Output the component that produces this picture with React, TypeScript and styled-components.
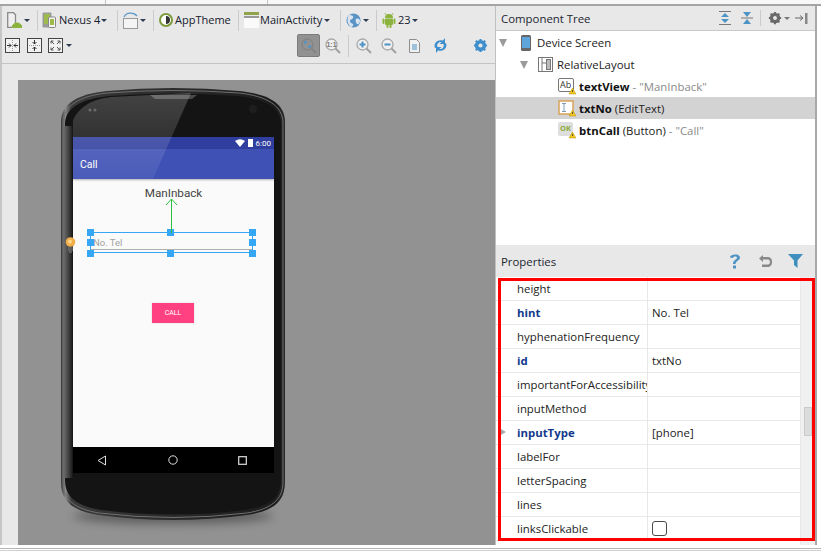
import React, { FC } from 'react'
import styled, { createGlobalStyle } from 'styled-components'

const GlobalStyle = createGlobalStyle`
  html, body { margin: 0; padding: 0; background: #fff; }
  * { box-sizing: border-box; }
`

const Page = styled.div`
  width: 821px;
  height: 551px;
  overflow: hidden;
  display: flex;
  flex-direction: column;
  background: #fff;
  font-family: "Open Sans", "Noto Sans", sans-serif;
  font-size: 11.4px;
  color: #1c1c1c;
`
const TopStrip = styled.div`
  height: 6px;
  flex: none;
  background:
    linear-gradient(#c4c4c4, #c4c4c4) 105px 0 / 1px 4px no-repeat,
    linear-gradient(#c4c4c4, #c4c4c4) 267px 0 / 1px 4px no-repeat,
    #f8f8f8;
  border-bottom: 2px solid #a4a4a4;
`
const Main = styled.div`
  display: flex;
  height: 539px;
  flex: none;
`
const BottomStrip = styled.div`
  flex: 1;
  background: #fff;
  margin-top: 3px;
  border-top: 1px solid #b4b4b4;
  border-bottom: 1px solid #d0d0d0;
`
const Designer = styled.div`
  width: 496px;
  flex: none;
  display: flex;
  flex-direction: column;
  background: #e8e8e8;
  border-left: 2px solid #c6c6c6;
  border-right: 1px solid #c0c0c0;
`
const Toolbar = styled.div`
  height: 58px;
  flex: none;
  padding-top: 1px;
  border-bottom: 1px solid #c4c4c4;
  display: flex;
  flex-direction: column;
`
const ToolRow = styled.div`
  display: flex;
  align-items: center;
  height: 26px;
  padding-left: 5px;
`
const ToolRowBottom = styled(ToolRow)`
  height: 25px;
  padding-left: 3px;
`
const Sep = styled.span<{ $l: number; $r: number; $h?: number }>`
  width: 1px;
  height: ${(p) => p.$h ?? 21}px;
  background: #cbcbcb;
  margin: 0 ${(p) => p.$r}px 0 ${(p) => p.$l}px;
  flex: none;
`
const ToolLabel = styled.span<{ $l?: number; $w: number }>`
  font-size: 11px;
  color: #14202c;
  margin-left: ${(p) => p.$l ?? 3}px;
  width: ${(p) => p.$w}px;
  flex: none;
  white-space: nowrap;
  line-height: 16px;
`
const Caret = styled.span<{ $l?: number; $c?: string }>`
  width: 0;
  height: 0;
  flex: none;
  margin-left: ${(p) => p.$l ?? 2}px;
  border-left: 3px solid transparent;
  border-right: 3px solid transparent;
  border-top: 3px solid ${(p) => p.$c ?? '#2e3d52'};
`
const Icon = styled.svg<{ $l?: number; $mr?: number }>`
  flex: none;
  display: block;
  margin-left: ${(p) => p.$l ?? 0}px;
  margin-right: ${(p) => p.$mr ?? 0}px;
`
const ActiveTool = styled.div`
  width: 23px;
  height: 23px;
  margin-left: 225px;
  flex: none;
  background: #929292;
  border: 1px solid #7c7c7c;
  border-radius: 2px;
  display: flex;
  align-items: center;
  justify-content: center;
`
const CanvasArea = styled.div`
  flex: 1;
  padding: 16px 0 0 16px;
  min-height: 0;
`
const Stage = styled.div`
  height: 465px;
  background: #929292;
  padding: 10px 0 0 43px;
`
const Phone = styled.div`
  position: relative;
  width: 224px;
  height: 432px;
`
const PhoneArt = styled.svg`
  position: absolute;
  left: -14px;
  top: -4px;
`
const Screen = styled.div`
  position: absolute;
  left: 12px;
  top: 47px;
  width: 201px;
  height: 336px;
  display: flex;
  flex-direction: column;
  background: #fafafa;
`
const StatusBar = styled.div`
  height: 12px;
  flex: none;
  background: #303f9f;
  color: #fff;
  display: flex;
  align-items: center;
  justify-content: flex-end;
  gap: 3px;
  padding-right: 3px;
  font-family: Roboto, sans-serif;
  font-size: 8px;
`
const AppBar = styled.div`
  height: 30px;
  flex: none;
  background: #3f51b5;
  color: #fff;
  font-family: Roboto, sans-serif;
  font-size: 10.5px;
  display: flex;
  align-items: center;
  padding-left: 7px;
  box-shadow: 0 1px 2px rgba(0, 0, 0, 0.3);
`
const Content = styled.div`
  flex: 1;
  position: relative;
  display: flex;
  flex-direction: column;
  font-family: Roboto, sans-serif;
`
const ViewText = styled.div`
  margin-top: 7px;
  text-align: center;
  font-size: 11.7px;
  line-height: 14px;
  color: #444;
`
const Field = styled.div`
  position: relative;
  width: 163px;
  height: 21px;
  margin: 32px 0 0 17px;
  border: 1px solid #35a7f5;
  font-size: 9.5px;
  color: #a2a2a2;
  padding: 3px 0 0 2px;
  line-height: 14px;
`
const FieldLine = styled.span`
  position: absolute;
  left: 0;
  right: 0;
  bottom: 2px;
  height: 1px;
  background: #b0b0b0;
`
const Handle = styled.span<{ $x: number; $y: number }>`
  position: absolute;
  width: 7px;
  height: 7px;
  background: #35a7f5;
  left: ${(p) => p.$x}px;
  top: ${(p) => p.$y}px;
`
const Anchor = styled.svg`
  position: absolute;
  left: 91px;
  top: 19px;
`
const Bulb = styled.svg`
  position: absolute;
  left: -8px;
  top: 58px;
`
const CallButton = styled.div`
  width: 42px;
  height: 20px;
  margin: 50px 0 0 79px;
  background: #ff4081;
  color: #fff;
  font-size: 7px;
  display: flex;
  align-items: center;
  justify-content: center;
  box-shadow: 0 0 1px rgba(0, 0, 0, 0.25);
`
const NavBar = styled.div`
  height: 26px;
  flex: none;
  background: #000;
  display: flex;
  align-items: center;
  justify-content: space-between;
  padding: 0 27px 0 24px;
`
const Glare = styled.svg`
  position: absolute;
  left: 0;
  top: 0;
  pointer-events: none;
`
const SidePanel = styled.div`
  position: relative;
  width: 321px;
  flex: none;
  display: flex;
  flex-direction: column;
  border-right: 2px solid #a8a8a8;
`
const PanelHeader = styled.div<{ $h: number }>`
  height: ${(p) => p.$h}px;
  flex: none;
  background: #e8e8e8;
  display: flex;
  align-items: center;
  padding-left: 5px;
  font-size: 11.4px;
`
const PanelTitle = styled.span`
  flex: 1;
  color: #1c2630;
`
const TreeHeader = styled(PanelHeader)`
  border-bottom: 1px solid #c8c8c8;
`
const Tree = styled.div`
  height: 214px;
  flex: none;
  background: #fff;
`
const TreeRow = styled.div<{ $indent: number; $selected?: boolean }>`
  height: 22px;
  display: flex;
  align-items: center;
  padding-left: ${(p) => p.$indent}px;
  padding-top: 1px;
  background: ${(p) => (p.$selected ? '#d3d3d3' : 'transparent')};
  white-space: nowrap;
`
const TreeArrow = styled.span<{ $r: number }>`
  width: 0;
  height: 0;
  flex: none;
  margin-right: ${(p) => p.$r}px;
  border-left: 4px solid transparent;
  border-right: 4px solid transparent;
  border-top: 8px solid #9a9a9a;
`
const TreeName = styled.b`
  margin-left: 3px;
  font-weight: 700;
  color: #111;
`
const TreeType = styled.span`
  margin-left: 3px;
  color: #222;
`
const TreeHint = styled.span`
  margin-left: 3px;
  color: #8a8a8a;
`
const TreeLabel = styled.span<{ $l: number }>`
  margin-left: ${(p) => p.$l}px;
  color: #222;
`
const PropBody = styled.div`
  flex: 1;
  display: flex;
  background: #fff;
  min-height: 0;
`
const PropTable = styled.div`
  width: 305px;
  flex: none;
  border-right: 1px solid #e8e8e8;
`
const PropRow = styled.div`
  height: 24px;
  display: grid;
  grid-template-columns: 152px 1fr;
  border-bottom: 1px solid #e8e8e8;
  position: relative;
`
const PropName = styled.div<{ $bold?: boolean }>`
  padding-left: 21px;
  line-height: 23px;
  white-space: nowrap;
  overflow: hidden;
  border-right: 1px solid #e8e8e8;
  color: ${(p) => (p.$bold ? '#13398c' : '#222')};
  font-weight: ${(p) => (p.$bold ? 700 : 400)};
`
const PropValue = styled.div`
  padding-left: 4px;
  line-height: 23px;
  color: #222;
  display: flex;
  align-items: center;
`
const RowArrow = styled.span`
  position: absolute;
  left: 3px;
  top: 7px;
  width: 0;
  height: 0;
  border-top: 4px solid transparent;
  border-bottom: 4px solid transparent;
  border-left: 7px solid #a8a8a8;
`
const Checkbox = styled.span`
  width: 15px;
  height: 15px;
  border: 1px solid #4a4a4a;
  border-radius: 3px;
  background: #fff;
`
const Scrollbar = styled.div`
  flex: 1;
  background: #f0f0f0;
  padding: 130px 3px 0 3px;
`
const ScrollThumb = styled.div`
  height: 29px;
  background: #dcdcdc;
  border: 1px solid #cacaca;
`
const GearSlot = styled.span`
  margin-left: 25px;
`
const Highlight = styled.div`
  position: absolute;
  left: 2px;
  top: 272px;
  width: 317px;
  height: 263px;
  border: 3px solid #ff0000;
  pointer-events: none;
`

const props = [
  { name: 'height' },
  { name: 'hint', bold: true, value: 'No. Tel' },
  { name: 'hyphenationFrequency' },
  { name: 'id', bold: true, value: 'txtNo' },
  { name: 'importantForAccessibility' },
  { name: 'inputMethod' },
  { name: 'inputType', bold: true, value: '[phone]', arrow: true },
  { name: 'labelFor' },
  { name: 'letterSpacing' },
  { name: 'lines' },
  { name: 'linksClickable', check: true },
]

const AndroidGlyph: FC<{ w: number; h: number; l?: number }> = ({ w, h, l }) => (
  <Icon $l={l} width={w} height={h} viewBox="0 0 14 16">
    <path d="M3 6a4 4 0 0 1 8 0z" fill="#8cb33c" />
    <path d="M4 3L3 1M10 3l1-2" stroke="#8cb33c" strokeWidth="0.8" />
    <rect x="3" y="6.5" width="8" height="6.5" rx="1" fill="#8cb33c" />
    <rect x="0.5" y="6.5" width="2" height="5.5" rx="1" fill="#8cb33c" />
    <rect x="11.5" y="6.5" width="2" height="5.5" rx="1" fill="#8cb33c" />
    <rect x="4.5" y="12" width="2" height="4" rx="1" fill="#8cb33c" />
    <rect x="7.5" y="12" width="2" height="4" rx="1" fill="#8cb33c" />
  </Icon>
)

const ResizeIcon: FC<{ kind: number; l?: number }> = ({ kind, l }) => (
  <Icon $l={l} width={15} height={15} viewBox="0 0 15 15">
    <rect x="0.5" y="0.5" width="14" height="14" fill="#f2f2f2" stroke="#444" />
    {kind === 0 && (
      <>
        <path d="M7.5 2v11" stroke="#999" strokeDasharray="1 1" />
        <path d="M2 7.5h4M13 7.5H9M4 5.5l2 2-2 2M11 5.5l-2 2 2 2" stroke="#333" fill="none" />
      </>
    )}
    {kind === 1 && (
      <>
        <path d="M2 7.5h11" stroke="#999" strokeDasharray="1 1" />
        <path d="M7.5 2v4M7.5 13V9M5.5 4l2 2 2-2M5.5 11l2-2 2 2" stroke="#333" fill="none" />
      </>
    )}
    {kind === 2 && (
      <path d="M3 3l3 3M12 3L9 6M3 12l3-3M12 12L9 9M3 5.5V3h2.5M12 5.5V3H9.5M3 9.5V12h2.5M12 9.5V12H9.5" stroke="#555" fill="none" />
    )}
  </Icon>
)

const ZoomIcon: FC<{ kind: 'fit' | 'one' | 'plus' | 'minus'; l?: number }> = ({ kind, l }) => (
  <Icon $l={l} width={16} height={16} viewBox="0 0 16 16">
    <circle cx="6.5" cy="6.5" r="5.5" fill={kind === 'fit' ? 'none' : '#f0f0f0'} stroke={kind === 'fit' ? '#848484' : '#a8a8a8'} strokeWidth="1.3" />
    <path d="M10.5 10.5l4.500 4.500" stroke={kind === 'fit' ? '#848484' : '#a0a0a0'} strokeWidth="2" />
    {kind === 'plus' && <path d="M3.5 6.5h6M6.5 3.5v6" stroke="#4d93c4" strokeWidth="2" />}
    {kind === 'minus' && <path d="M3.5 6.5h6" stroke="#4d93c4" strokeWidth="2" />}
    {kind === 'fit' && <path d="M3 3h3v2H5v1H3zM10 10H7V8h1V7h2z" fill="#5a93bd" />}
    {kind === 'one' && (
      <text x="6.5" y="9" textAnchor="middle" fontSize="7" fontWeight="700" fontFamily="Liberation Sans" fill="#777">
        1:1
      </text>
    )}
  </Icon>
)

const GearIcon: FC<{ size: number; color: string; l?: number }> = ({ size, color, l }) => (
  <Icon $l={l} width={size} height={size} viewBox="0 0 16 16">
    <circle cx="8" cy="8" r="4.5" fill="none" stroke={color} strokeWidth="3" />
    <path d="M8 1v14M1 8h14M3 3l10 10M13 3L3 13" stroke={color} strokeWidth="2.2" />
    <circle cx="8" cy="8" r="2.2" fill="#e8e8e8" />
  </Icon>
)

const WarnBadge: FC = () => (
  <g>
    <path d="M11 16l3.5-6 3.500 6z" fill="#f2c81e" stroke="#b89208" strokeWidth="0.5" />
    <path d="M14.5 12v2" stroke="#333" strokeWidth="0.8" />
  </g>
)

const App: FC = () => {
  return (
    <Page>
      <GlobalStyle />
      <TopStrip />
      <Main>
        <Designer>
          <Toolbar>
            <ToolRow>
              <Icon width={15} height={16} viewBox="0 0 15 16">
                <path d="M.7.7h5.800l2 2v12.600H.7z" fill="#efefef" stroke="#8a8a8a" strokeWidth="1.300" />
                <path d="M5 15.500a5 5 0 0 1 10 0z" fill="#8cb33c" />
                <rect x="5" y="13" width="10" height="3" fill="#8cb33c" />
              </Icon>
              <Caret $l={2} />
              <Sep $l={7} $r={4} />
              <Icon width={14} height={16} viewBox="0 0 14 16">
                <rect x="0.5" y="0.5" width="9" height="15" rx="1" fill="#9a9a9a" />
                <rect x="2" y="2" width="6" height="10" fill="#9dbb4a" />
                <rect x="6.5" y="5" width="7" height="10.5" rx="1" fill="#f4f4f4" stroke="#888" />
                <rect x="8" y="7" width="4" height="6" fill="#9dbb4a" />
              </Icon>
              <ToolLabel $l={3} $w={41}>Nexus 4</ToolLabel>
              <Caret $l={1} />
              <Sep $l={10} $r={4} />
              <Icon width={17} height={18} viewBox="0 0 17 18">
                <rect x="1.500" y="7.500" width="14" height="10" fill="#f4f4f4" stroke="#999" />
                <path d="M2 6C4 1 12 1 15 5" fill="none" stroke="#5d9acb" strokeWidth="1.3" />
              </Icon>
              <Caret $l={1} />
              <Sep $l={7} $r={5} />
              <Icon width={14} height={14} viewBox="0 0 14 14">
                <circle cx="7" cy="7" r="6" fill="#fff" stroke="#7d9a3a" strokeWidth="2" />
                <path d="M7 3a4 4 0 0 1 0 8z" fill="#333" />
              </Icon>
              <ToolLabel $l={2} $w={56}>AppTheme</ToolLabel>
              <Sep $l={7} $r={5} />
              <Icon width={15} height={16} viewBox="0 0 15 16">
                <rect x="0" y="0" width="15" height="3" fill="#8fa34a" />
                <rect x="0" y="4" width="15" height="2" fill="#999" />
                <rect x="0" y="6" width="15" height="10" fill="#fafafa" />
              </Icon>
              <ToolLabel $l={1} $w={62}>MainActivity</ToolLabel>
              <Caret $l={2} />
              <Sep $l={10} $r={5} />
              <Icon width={15} height={15} viewBox="0 0 15 15">
                <circle cx="7.5" cy="7.5" r="7" fill="#5b93c5" />
                <path d="M3 2c3 0 5 1 4 3S4 6 4 8s2 2 3 3-1 3-2 3C2 12 0 6 3 2zM10 6c2-1 4 0 4 2s-2 4-3 3-2-4-1-5z" fill="#d9e4ee" />
              </Icon>
              <Caret $l={2} />
              <Sep $l={7} $r={5} />
              <AndroidGlyph w={14} h={16} />
              <ToolLabel $l={2} $w={12}>23</ToolLabel>
              <Caret $l={2} />
            </ToolRow>
            <ToolRowBottom>
              <ResizeIcon kind={0} />
              <ResizeIcon kind={1} l={7} />
              <ResizeIcon kind={2} l={6} />
              <Caret $l={3} />
              <ActiveTool>
                <ZoomIcon kind="fit" />
              </ActiveTool>
              <ZoomIcon kind="one" l={5} />
              <Sep $l={7} $r={7} $h={22} />
              <ZoomIcon kind="plus" />
              <ZoomIcon kind="minus" l={9} />
              <Icon $l={12} width={11} height={14} viewBox="0 0 11 14">
                <path d="M0.5 0.5h7l3 3v10h-10z" fill="#f0f0f0" stroke="#8e8e8e" />
                <path d="M3 6h5M3 8h5M3 10h5" stroke="#4d93c4" />
              </Icon>
              <Icon $l={13} width={15} height={15} viewBox="0 0 15 15">
                <path d="M2 10C0 5 5 1 10 2.500L12 0v6H6.500L8.500 4C5.500 3.500 3.500 6 4.500 9zM13 5c2 5-3 9-8 7.500L3 15V9h5.500L6.500 11c3 .5 5-2 4-5z" fill="#3f8fcc" />
              </Icon>
              <GearSlot>
                <GearIcon size={15} color="#3f8fcc" />
              </GearSlot>
            </ToolRowBottom>
          </Toolbar>
          <CanvasArea>
            <Stage>
              <Phone>
                <PhoneArt width={252} height={450} viewBox="0 0 252 450">
                  <defs>
                    <linearGradient id="rim" x1="0" y1="0" x2="1" y2="0">
                      <stop offset="0" stopColor="#333" />
                      <stop offset="0.02" stopColor="#8a8a8a" />
                      <stop offset="0.045" stopColor="#3a3a3a" />
                      <stop offset="0.955" stopColor="#1c1c1c" />
                      <stop offset="1" stopColor="#2a2a2a" />
                    </linearGradient>
                    <linearGradient id="side" x1="0" y1="0" x2="1" y2="0">
                      <stop offset="0" stopColor="#6a6a6a" />
                      <stop offset="0.6" stopColor="#3a3a3a" />
                      <stop offset="1" stopColor="#141414" />
                    </linearGradient>
                    <filter id="soft" x="-20%" y="-100%" width="140%" height="300%">
                      <feGaussianBlur stdDeviation="5" />
                    </filter>
                  </defs>
                  <ellipse cx="126" cy="430" rx="100" ry="8" fill="#000" opacity="0.35" filter="url(#soft)" />
                  <path d="M14 36C14 18 30 8 60 5Q126 -1 192 5C222 8 238 18 238 36V396C238 416 226 425 200 429Q126 439 52 429C26 425 14 416 14 396Z" fill="url(#rim)" />
                  <path d="M16 37C16 20 32 10 60 7Q126 2 192 7C220 10 236 20 236 37V396C236 414 224 423 200 427Q126 436 52 427C28 423 16 414 16 396Z" fill="none" stroke="#707070" strokeWidth="1" />
                  <path d="M18 38C18 22 34 13 62 10Q126 5 190 10C218 13 234 22 234 38V394C234 411 222 420 198 424Q126 433 54 424C30 420 18 411 18 394Z" fill="#141414" />
                  <rect x="17" y="40" width="9" height="352" fill="url(#side)" />
                  <path d="M103 9h47l-5 4h-37z" fill="#4a4a4a" />
                  <circle cx="206" cy="23" r="4" fill="#1e1e1e" />
                  <circle cx="43" cy="24" r="1.500" fill="#4c4c4c" />
                  <circle cx="48" cy="24" r="1.500" fill="#4c4c4c" />
                </PhoneArt>
                <Screen>
                  <StatusBar>
                    <svg width="10" height="8" viewBox="0 0 10 8">
                      <path d="M0 2Q5 -1.500 10 2L5 8z" fill="#fff" />
                    </svg>
                    <svg width="5" height="8" viewBox="0 0 5 8">
                      <rect width="5" height="8" fill="#fff" />
                    </svg>
                    <span>6:00</span>
                  </StatusBar>
                  <AppBar>Call</AppBar>
                  <Content>
                    <ViewText>ManInback</ViewText>
                    <Field>
                      No. Tel
                      <FieldLine />
                      <Handle $x={-4} $y={-4} />
                      <Handle $x={76} $y={-4} />
                      <Handle $x={158} $y={-4} />
                      <Handle $x={-4} $y={6} />
                      <Handle $x={158} $y={6} />
                      <Handle $x={-4} $y={17} />
                      <Handle $x={76} $y={17} />
                      <Handle $x={158} $y={17} />
                    </Field>
                    <Anchor width={14} height={35} viewBox="0 0 14 35">
                      <path d="M7.5 35V1M2 7L7.500 1l5.500 6" fill="none" stroke="#2fc040" strokeWidth="1" />
                    </Anchor>
                    <Bulb width={11} height={16} viewBox="0 0 11 16">
                      <circle cx="5.5" cy="5" r="4.8" fill="#f2ae4b" />
                      <circle cx="5" cy="4.5" r="2" fill="#fbd78a" />
                      <path d="M3 11h5M3 13h5M4 15h3" stroke="#8c8c8c" strokeWidth="1.2" />
                    </Bulb>
                    <CallButton>CALL</CallButton>
                  </Content>
                  <NavBar>
                    <svg width="10" height="11" viewBox="0 0 10 11">
                      <path d="M8.5 1v9L1 5.500z" fill="none" stroke="#ddd" strokeWidth="1" />
                    </svg>
                    <svg width="10" height="10" viewBox="0 0 10 10">
                      <circle cx="5" cy="5" r="4.2" fill="none" stroke="#ddd" strokeWidth="1" />
                    </svg>
                    <svg width="9" height="9" viewBox="0 0 9 9">
                      <rect x="0.7" y="0.7" width="7.6" height="7.600" fill="none" stroke="#ddd" strokeWidth="1.2" />
                    </svg>
                  </NavBar>
                </Screen>
                <Glare width={224} height={92} viewBox="0 0 224 92">
                  <defs>
                    <linearGradient id="shine" x1="0" y1="0" x2="0" y2="1">
                      <stop offset="0" stopColor="#fff" stopOpacity="0.2" />
                      <stop offset="1" stopColor="#fff" stopOpacity="0.06" />
                    </linearGradient>
                  </defs>
                  <path d="M12 30C20 14 34 9 50 7L130 3 92 89H12z" fill="url(#shine)" />
                </Glare>
              </Phone>
            </Stage>
          </CanvasArea>
        </Designer>
        <SidePanel>
          <TreeHeader $h={25}>
            <PanelTitle>Component Tree</PanelTitle>
            <Icon width={14} height={14} viewBox="0 0 14 14">
              <path d="M1 .5h12M1 13.500h12" stroke="#777" />
              <path d="M7 2l4 4H3zM7 12l4-4H3z" fill="#4d93c4" />
            </Icon>
            <Icon $l={8} width={14} height={14} viewBox="0 0 14 14">
              <path d="M1 7h12" stroke="#777" />
              <path d="M7 6L3 1h8zM7 8l4 5H3z" fill="#4d93c4" />
            </Icon>
            <Sep $l={6} $r={7} $h={16} />
            <GearIcon size={14} color="#6a6a6a" />
            <Caret $l={2} $c="#777" />
            <Icon $l={5} $mr={7} width={13} height={13} viewBox="0 0 13 13">
              <path d="M0 6h7M5 3.500L8 6 5 8.500" fill="none" stroke="#666" />
              <rect x="10" y="1" width="2.5" height="11" fill="#888" />
            </Icon>
          </TreeHeader>
          <Tree>
            <TreeRow $indent={3}>
              <TreeArrow $r={14} />
              <Icon width={10} height={16} viewBox="0 0 10 16">
                <rect x="0" y="0" width="10" height="16" rx="1.5" fill="#666" />
                <rect x="1" y="2" width="8" height="11" fill="#5da5da" />
              </Icon>
              <TreeLabel $l={6}>Device Screen</TreeLabel>
            </TreeRow>
            <TreeRow $indent={24}>
              <TreeArrow $r={10} />
              <Icon width={15} height={15} viewBox="0 0 15 15">
                <rect x="0.5" y="0.5" width="14" height="14" fill="#fff" stroke="#777" />
                <rect x="8.5" y="2.500" width="4" height="10" fill="#bbb" stroke="#777" />
                <path d="M4 .5v14M4 6h4" stroke="#777" fill="none" />
              </Icon>
              <TreeLabel $l={4}>RelativeLayout</TreeLabel>
            </TreeRow>
            <TreeRow $indent={62}>
              <Icon width={18} height={17} viewBox="0 0 18 17">
                <rect x="0.5" y="0.5" width="15" height="13" rx="1.5" fill="#fff" stroke="#777" />
                <text x="2" y="10" fontSize="9" fontFamily="Open Sans" fill="#333">Ab</text>
                <WarnBadge />
              </Icon>
              <TreeName>textView</TreeName>
              <TreeHint>- "ManInback"</TreeHint>
            </TreeRow>
            <TreeRow $indent={62} $selected>
              <Icon width={18} height={17} viewBox="0 0 18 17">
                <rect x="1" y="1" width="14" height="13" fill="#fff" stroke="#d8a25a" strokeWidth="1.5" />
                <path d="M4 3.500h4M6 3.500v8M4 11.500h4" stroke="#7d9cb8" fill="none" />
                <WarnBadge />
              </Icon>
              <TreeName>txtNo</TreeName>
              <TreeType>(EditText)</TreeType>
            </TreeRow>
            <TreeRow $indent={62}>
              <Icon width={18} height={17} viewBox="0 0 18 17">
                <rect x="0" y="0" width="15" height="14" rx="2" fill="#dedede" />
                <text x="2" y="9" fontSize="7.5" fontWeight="700" fontFamily="Open Sans" fill="#8cab3a">OK</text>
                <WarnBadge />
              </Icon>
              <TreeName>btnCall</TreeName>
              <TreeType>(Button)</TreeType>
              <TreeHint>- "Call"</TreeHint>
            </TreeRow>
          </Tree>
          <PanelHeader $h={32}>
            <PanelTitle>Properties</PanelTitle>
            <Icon width={14} height={16} viewBox="0 0 14 16">
              <path d="M2 4.500C2 1 12 0 12 4.500c0 3-4 3-4.500 6.500H5c0-4.500 4-4 4-6.500C9 3 5 3 5 5z" fill="#4d93c4" />
              <rect x="5" y="12.500" width="3" height="3" fill="#4d93c4" />
            </Icon>
            <Icon $l={16} width={15} height={14} viewBox="0 0 15 14">
              <path d="M5 1L1 4.500 5 8V5.500h5c2.500 0 2.500 5 0 5H4V13h6c5.500 0 5.500-10 0-10H5z" fill="#8a8a8a" />
            </Icon>
            <Icon $l={15} $mr={12} width={15} height={14} viewBox="0 0 15 14">
              <path d="M0 0h15L9.500 6.500V14L6 11V6.500z" fill="#3f8fbe" />
            </Icon>
          </PanelHeader>
          <PropBody>
            <PropTable>
              {props.map((p) => (
                <PropRow key={p.name}>
                  {p.arrow && <RowArrow />}
                  <PropName $bold={p.bold}>{p.name}</PropName>
                  <PropValue>
                    {p.value}
                    {p.check && <Checkbox />}
                  </PropValue>
                </PropRow>
              ))}
            </PropTable>
            <Scrollbar>
              <ScrollThumb />
            </Scrollbar>
          </PropBody>
          <Highlight />
        </SidePanel>
      </Main>
      <BottomStrip />
    </Page>
  )
}

export default App
